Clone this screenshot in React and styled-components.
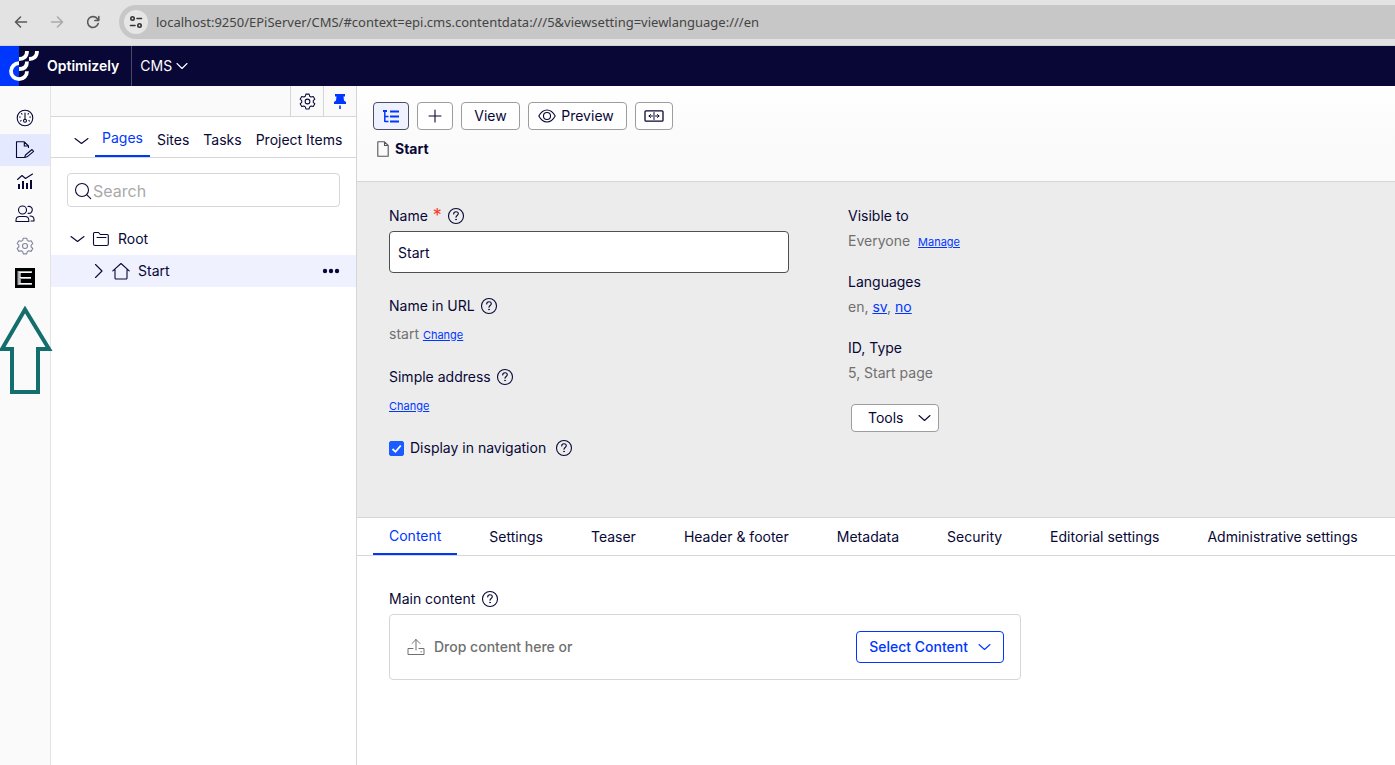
import React from "react";
import styled, { createGlobalStyle, css } from "styled-components";

const color = {
  ink: "#080736",
  blue: "#0037ff",
  muted: "#707070",
  line: "#d6d6d6",
  rail: "#fafafa",
};

const GlobalStyle = createGlobalStyle`
  *, *::before, *::after { box-sizing: border-box; }
  body {
    margin: 0;
    background: #fff;
    color: ${color.ink};
    font: 14px/20px Inter, "Liberation Sans", sans-serif;
  }
  button, input { font: inherit; color: inherit; }
  ul { list-style: none; margin: 0; padding: 0; }
  svg { display: block; flex: none; }
`;

const Page = styled.div`
  min-height: 100vh;
  display: flex;
  flex-direction: column;
`;

const plainButton = css`
  display: flex;
  align-items: center;
  justify-content: center;
  padding: 0;
  border: 0;
  background: none;
  cursor: pointer;
`;

/* Browser bar */
const BrowserBar = styled.div`
  display: flex;
  align-items: center;
  height: 46px;
  padding: 0 0 2px 3px;
  background: #e3e3e3;
  border-bottom: 1px solid #d2d2d2;
`;
const BrowserButton = styled.button`
  ${plainButton}
  width: 36px;
  height: 32px;
  color: ${(p) => (p.$dim ? "#aaa" : "#5a5a5a")};
`;
const AddressBar = styled.div`
  flex: 1;
  display: flex;
  align-items: center;
  gap: 8px;
  height: 34px;
  margin-left: 8px;
  padding-left: 5px;
  border-radius: 17px 0 0 17px;
  background: #c7c7c7;
`;
const SiteInfo = styled.button`
  ${plainButton}
  width: 24px;
  height: 24px;
  border-radius: 50%;
  background: #e6e6e6;
  color: #333;
`;
const Address = styled.input`
  flex: 1;
  min-width: 0;
  padding: 0;
  border: 0;
  outline: 0;
  background: none;
  color: #444;
  font: 13px/20px "Noto Sans", "Open Sans", sans-serif;
`;

/* Product header */
const Header = styled.header`
  display: flex;
  height: 40px;
  background: ${color.ink};
  color: #fff;
`;
const Brand = styled.a`
  display: flex;
  align-items: center;
  gap: 7px;
  padding-right: 12px;
  border-right: 1px solid #4a4a6c;
  color: #fff;
  font-weight: 600;
  text-decoration: none;
`;
const ProductMenu = styled.button`
  ${plainButton}
  gap: 4px;
  padding: 0 8px;
`;

/* Layout */
const Workspace = styled.div`
  flex: 1;
  display: flex;
`;
const Rail = styled.nav`
  position: relative;
  flex: none;
  width: 51px;
  padding-top: 16px;
  border-right: 1px solid #e3e3e3;
  background: ${color.rail};
`;
const RailLink = styled.a`
  display: flex;
  align-items: center;
  justify-content: center;
  height: 32px;
  color: ${(p) => (p.$dim ? "#8483a0" : color.ink)};
  background: ${(p) => (p.$active ? "#e4e9ff" : "none")};
`;
const Pointer = styled.svg`
  position: absolute;
  top: 220px;
  left: -1px;
  z-index: 1;
`;

const Side = styled.aside`
  flex: none;
  width: 306px;
  border-right: 1px solid ${color.line};
  background: #fff;
`;
const SideBar = styled.div`
  display: flex;
  justify-content: flex-end;
  height: 31px;
  border-bottom: 1px solid ${color.line};
  background: ${color.rail};
`;
const SideBarButton = styled.button`
  ${plainButton}
  width: 33px;
  border-left: 1px solid ${color.line};
  color: ${(p) => (p.$blue ? color.blue : color.ink)};
`;
const SideTabs = styled.div`
  display: flex;
  height: 41px;
  padding-left: 16px;
  border-bottom: 1px solid ${color.line};
`;
const Collapse = styled.button`
  ${plainButton}
  width: 28px;
  padding-top: 8px;
`;
const Tab = styled.button`
  ${plainButton}
  padding: ${(p) => (p.$wide ? "1px 16px 0" : "6px 7px 0")};
  white-space: nowrap;
  ${(p) =>
    p.$active &&
    css`
      padding-top: ${p.$wide ? "0" : "4px"};
      border-bottom: 2px solid ${color.blue};
      color: ${color.blue};
    `}
`;
const SearchBox = styled.label`
  display: flex;
  align-items: center;
  gap: 1px;
  height: 34px;
  margin: 15px 16px 16px;
  padding: 2px 0 0 6px;
  border: 1px solid ${color.line};
  border-radius: 4px;
`;
const SearchInput = styled.input`
  flex: 1;
  min-width: 0;
  padding: 0;
  border: 0;
  outline: 0;
  background: none;
  font-size: 16px;
  &::placeholder { color: #a9a9a9; opacity: 1; }
`;
const TreeRow = styled.li`
  display: flex;
  align-items: center;
  height: 32px;
  padding: 0 16px 0 ${(p) => (p.$level ? "40px" : "18px")};
  background: ${(p) => (p.$active ? "#eff1ff" : "none")};
`;
const TreeToggle = styled.button`
  ${plainButton}
  width: ${(p) => (p.$level ? "14px" : "16px")};
`;
const TreeLabel = styled.span`
  flex: 1;
  display: flex;
  align-items: center;
  gap: 8px;
  padding-left: 7px;
`;
const MoreButton = styled.button`
  ${plainButton}
`;

const Main = styled.main`
  flex: 1;
  min-width: 0;
`;
const Top = styled.div`
  height: 96px;
  padding: 16px 16px 0;
  border-bottom: 1px solid ${color.line};
  background: linear-gradient(#fff, #fafafa 60%);
`;
const Toolbar = styled.div`
  display: flex;
  gap: 8px;
`;
const Button = styled.button`
  ${plainButton}
  gap: ${(p) => p.$gap || 4}px;
  height: ${(p) => (p.$primary ? 32 : 28)}px;
  padding: ${(p) => p.$pad || "0 12px"};
  min-width: ${(p) => p.$min || "0"};
  border: 1px solid ${(p) => (p.$primary ? color.blue : "#9d9d9d")};
  border-radius: 4px;
  background: #fff;
  color: ${(p) => (p.$primary ? color.blue : color.ink)};
  ${(p) =>
    p.$pressed &&
    css`
      border-color: #4b4f63;
      background: #eff1ff;
      color: ${color.blue};
    `}
`;
const Title = styled.h1`
  display: flex;
  align-items: center;
  gap: 6px;
  margin: 9px 0 0 4px;
  font-size: 14px;
  line-height: 20px;
  font-weight: 700;
`;
const Properties = styled.section`
  display: flex;
  gap: 59px;
  padding: 24px 32px 59px;
  border-bottom: 1px solid ${color.line};
  background: #ececec;
`;
const Fields = styled.div`
  display: flex;
  flex-direction: column;
  gap: ${(p) => p.$gap}px;
  width: ${(p) => p.$width || "auto"};
`;
const Field = styled.div`
  display: flex;
  flex-direction: column;
  gap: ${(p) => p.$gap || 5}px;
`;
const Line = styled.div`
  display: flex;
  align-items: center;
  gap: ${(p) => p.$gap || 6}px;
  height: 20px;
`;
const CheckLabel = styled.label`
  display: flex;
  align-items: center;
  gap: 6px;
`;
const Required = styled.span`
  color: #f5402c;
  font-size: 18px;
`;
const Value = styled.div`
  height: 20px;
  color: ${color.muted};
`;
const Link = styled.a`
  color: ${color.blue};
  font-size: ${(p) => (p.$small ? 11 : 14)}px;
  margin-left: ${(p) => (p.$spaced ? 4 : 0)}px;
`;
const NameInput = styled.input`
  height: 42px;
  padding: 0 8px;
  border: 1px solid #4f4f4f;
  border-radius: 4px;
  background: #fff;
`;
const Checkbox = styled.input`
  appearance: none;
  width: 15px;
  height: 15px;
  margin: 0;
  border: 1px solid #777;
  border-radius: 2px;
  &:checked {
    border-color: #1a5cff;
    background: #1a5cff url("data:image/svg+xml,%3Csvg xmlns='http://www.w3.org/2000/svg' viewBox='0 0 13 13'%3E%3Cpath d='M2.5 7l3 2.8L10.800 3.500' fill='none' stroke='white' stroke-width='1.800'/%3E%3C/svg%3E");
  }
`;
const ToolsSlot = styled.div`
  display: flex;
  padding-left: 3px;
`;
const MainTabs = styled.div`
  display: flex;
  gap: 16px;
  height: 38px;
  padding: 0 16px;
  border-bottom: 1px solid ${color.line};
`;
const ContentArea = styled.section`
  padding: 33px 32px;
`;
const DropZone = styled.div`
  display: flex;
  align-items: center;
  gap: 8px;
  max-width: 632px;
  margin-top: 5px;
  padding: 16px;
  border: 1px solid ${color.line};
  border-radius: 4px;
  color: ${color.muted};
  font-weight: 500;
`;
const DropText = styled.span`
  flex: 1;
`;

/* Icons */
const Icon = ({ w = 20, h = w, sw = 1.1, children, ...rest }) => (
  <svg width={w} height={h} viewBox={`0 0 ${w} ${h}`} fill="none" stroke="currentColor" strokeWidth={sw} strokeLinejoin="round" strokeLinecap="round" aria-hidden="true" {...rest}>
    {children}
  </svg>
);
const Chevron = ({ w = 14 }) => (
  <Icon w={w} h={8} sw={1.1}><path d={`M1 1.500L${w / 2} 6.500L${w - 1} 1.500`} /></Icon>
);
const Help = () => (
  <Icon w={18} sw={1.1}>
    <circle cx="9" cy="9" r="7.500" />
    <path d="M6.700 7c0-1.500 1-2.200 2.300-2.200s2.300.8 2.300 2c0 1.700-2.300 1.600-2.300 3.400" />
    <circle cx="9" cy="12.500" r=".5" fill="currentColor" strokeWidth=".6" />
  </Icon>
);
const Gear = ({ w = 18 }) => (
  <svg width={w} height={w} viewBox="0 0 18 18" fill="none" stroke="currentColor" strokeWidth="1.100" strokeLinejoin="round" aria-hidden="true">
    <path d="M7.300 1.200h3.400l.6 2.200 1.500.9 2.300-.6 1.700 2.900-1.700 1.600v1.700l1.700 1.600-1.700 2.900-2.300-.6-1.500.9-.6 2.200H7.300l-.6-2.200-1.500-.9-2.300.6-1.700-2.900 1.700-1.600V8.200L1.200 6.600l1.700-2.900 2.300.6 1.500-.9z" />
    <circle cx="9" cy="9" r="2.500" />
  </svg>
);
const Logo = () => (
  <svg width="40" height="40" viewBox="0 0 40 40" fill="none" aria-hidden="true">
    <rect width="19" height="40" fill={color.blue} />
    <g stroke="#fff" strokeWidth="3.800">
      <path d="M27 5C27 10.500 24 13 19 13" />
      <path d="M37 5C37 10.500 34 13 29 13" />
      <path d="M27 15.400C27 20.500 24 23 19 23" />
      <path d="M19 17.200A8 8 0 1 0 27 25.200" />
    </g>
  </svg>
);

const railItems = [
  { name: "Dashboard", icon: (
    <Icon w={18}>
      <circle cx="9" cy="9" r="7.800" />
      <path d="M9 4v6.500M5.500 4.500l.5.600M12.500 4.500l-.5.600M3.500 8h.8M13.700 8h.8M4.500 12l.6-.4M13.500 12l-.6-.4" />
      <circle cx="9" cy="11.800" r="1.500" />
    </Icon>) },
  { name: "Edit", active: true, icon: (
    <Icon w={20}>
      <path d="M13.500 7.500V6L9.300 1.800H1.500v15.700h8M9.300 1.800V6h4.200" />
      <path d="M10.500 15l6.500-5.500 1.600 1.900-6.500 5.400-2.500.7z" />
    </Icon>) },
  { name: "Reports", icon: (
    <Icon w={18}>
      <path d="M1.500 6.500L6 2.500l3.500 3 7-4.500" />
      <path d="M3 16v-5M7 16V8M11 16v-6M15 16V7" strokeWidth="2" strokeLinecap="butt" />
    </Icon>) },
  { name: "Audiences", icon: (
    <Icon w={20}>
      <circle cx="7.500" cy="6" r="4" />
      <path d="M1 17.500v-1.300c0-2.700 2.200-3.700 4-3.700h5c2 0 3.800 1.200 3.800 3.700v1.300zM13 2.500c2.500-.6 4.300 1 4.300 3.300s-1.700 4-4.300 3.500M15 12c2.500 0 4 1.300 4 3.700v1.300h-3" />
    </Icon>) },
  { name: "Settings", dim: true, icon: <Gear /> },
  { name: "Episerver", icon: (
    <svg width="20" height="20" viewBox="0 0 20 20" aria-hidden="true">
      <rect width="20" height="20" fill="#000" />
      <path d="M3.500 3v14M3 4h14M6 10h10M3 16h14" stroke="#a9b1b5" strokeWidth="2" fill="none" />
      <path d="M5 4v12M5 4.500h11.500M5 9.500h11M5 15.500h11.500" stroke="#fff" strokeWidth="1.200" fill="none" />
    </svg>) },
];

const sideTabs = ["Pages", "Sites", "Tasks", "Project Items"];
const mainTabs = ["Content", "Settings", "Teaser", "Header & footer", "Metadata", "Security", "Editorial settings", "Administrative settings"];

export default function App() {
  return (
    <Page>
      <GlobalStyle />
      <BrowserBar>
        <BrowserButton aria-label="Back">
          <Icon w={14} sw={1.6}><path d="M12.500 7H1.500M6.500 2L1.500 7l5 5" /></Icon>
        </BrowserButton>
        <BrowserButton aria-label="Forward" $dim>
          <Icon w={14} sw={1.6}><path d="M1.500 7h11M7.500 2l5 5-5 5" /></Icon>
        </BrowserButton>
        <BrowserButton aria-label="Reload">
          <Icon w={14} sw={1.6}><path d="M12.200 8.500A5.400 5.400 0 1 1 11.500 4L12.800 5.400M12.800 1.500v4H8.800" /></Icon>
        </BrowserButton>
        <AddressBar>
          <SiteInfo aria-label="Site information">
            <Icon w={14} sw={1.6}>
              <circle cx="3.500" cy="3.500" r="1.700" /><path d="M8 3.500h4.500M1.500 10.500h4.500" /><circle cx="10.500" cy="10.500" r="1.700" />
            </Icon>
          </SiteInfo>
          <Address aria-label="Address" defaultValue="localhost:9250/EPiServer/CMS/#context=epi.cms.contentdata:///5&viewsetting=viewlanguage:///en" />
        </AddressBar>
      </BrowserBar>

      <Header>
        <Brand href="#home"><Logo />Optimizely</Brand>
        <ProductMenu>CMS<Chevron w={12} /></ProductMenu>
      </Header>

      <Workspace>
        <Rail aria-label="Main">
          {railItems.map((item) => (
            <RailLink key={item.name} href="#nav" aria-label={item.name} $active={item.active} $dim={item.dim}>{item.icon}</RailLink>
          ))}
          <Pointer width="54" height="89" viewBox="0 0 54 89" fill="none" stroke="#146e6e" strokeWidth="4" aria-hidden="true">
            <path d="M26 3.500L3 43H13v43h26V43h11z" />
          </Pointer>
        </Rail>

        <Side>
          <SideBar>
            <SideBarButton aria-label="Panel settings"><Gear w={17} /></SideBarButton>
            <SideBarButton aria-label="Pin" $blue>
              <Icon w={14} h={16} stroke="none" fill="currentColor">
                <path d="M2 1h10v2.500h-1.500l.5 4 2 1.500v2H1V9l2-1.500.5-4H2zM6.200 12.500h1.600V16H6.200z" />
              </Icon>
            </SideBarButton>
          </SideBar>
          <SideTabs>
            <Collapse aria-label="Collapse"><Chevron w={15} /></Collapse>
            {sideTabs.map((t, i) => <Tab key={t} $active={i === 0}>{t}</Tab>)}
          </SideTabs>
          <SearchBox>
            <Icon w={18}><circle cx="8" cy="8" r="6.500" /><path d="M12.700 12.700l4 4" /></Icon>
            <SearchInput placeholder="Search" aria-label="Search" />
          </SearchBox>
          <ul>
            <TreeRow>
              <TreeToggle aria-label="Collapse Root"><Chevron w={15} /></TreeToggle>
              <TreeLabel>
                <Icon w={18} h={16}><path d="M1.500 13V2.500q0-1 1-1h4l1.800 2h7q1 0 1 1V13q0 1.500-1.500 1.500H3q-1.500 0-1.500-1.500zM5 6.500h9" /></Icon>
                Root
              </TreeLabel>
            </TreeRow>
            <TreeRow $level $active>
              <TreeToggle $level aria-label="Expand Start"><Icon w={9} h={16}><path d="M1.500 1.500L8 8l-6.500 6.500" /></Icon></TreeToggle>
              <TreeLabel>
                <Icon w={18}><path d="M.8 8.800L9 1.500l8.200 7.300M3 7.500v8.500q0 1 1 1h10q1 0 1-1V7.500" /></Icon>
                Start
              </TreeLabel>
              <MoreButton aria-label="More options">
                <Icon w={18} h={6} stroke="none" fill="currentColor"><circle cx="3" cy="3" r="2.200" /><circle cx="9" cy="3" r="2.200" /><circle cx="15" cy="3" r="2.200" /></Icon>
              </MoreButton>
            </TreeRow>
          </ul>
        </Side>

        <Main>
          <Top>
            <Toolbar>
              <Button aria-label="Toggle tree" $pad="0 9px" $pressed>
                <Icon w={16} sw={2} strokeLinecap="butt" strokeLinejoin="miter"><path d="M0 3h4" /><path d="M1.800 2v12M1.800 8.500H5.500M1.800 13.500H5.500" strokeWidth="1.500" /><path d="M7 3.500h9M7 8.500h9M7 13.500h9" /></Icon>
              </Button>
              <Button aria-label="Add" $pad="0 10px"><Icon w={14}><path d="M7 1v12M1 7h12" /></Icon></Button>
              <Button $min="59px">View</Button>
              <Button $pad="0 12px 0 9px" $gap={5} $min="99px">
                <Icon w={18} h={16}><path d="M.8 8C3 4 6 2 9 2s6 2 8.200 6C15 12 12 14 9 14S3 12 .8 8z" /><circle cx="9" cy="8" r="3.500" /></Icon>
                Preview
              </Button>
              <Button aria-label="Compare" $pad="0 8px">
                <Icon w={20} h={12}><rect x="1" y=".8" width="18" height="10.400" rx="1" strokeWidth="1.300" /><path d="M10 2.500v7M5 6h3.500M6.500 4.500L5 6l1.500 1.500M11.500 6H15M13.500 4.500L15 6l-1.500 1.500" strokeWidth="1" /></Icon>
              </Button>
            </Toolbar>
            <Title>
              <Icon w={12} h={16} stroke="#555"><path d="M.8.8h6.700l3.700 3.700v10.700H.8zM7.500.8v3.700h3.700" /></Icon>
              Start
            </Title>
          </Top>

          <Properties>
            <Fields $gap={23} $width="400px">
              <Field>
                <Line $gap={5}><label htmlFor="name">Name</label><Required>*</Required><Help /></Line>
                <NameInput id="name" defaultValue="Start" />
              </Field>
              <Field $gap={8}>
                <Line $gap={5}>Name in URL<Help /></Line>
                <Value>start <Link href="#change" $small>Change</Link></Value>
              </Field>
              <Field $gap={8}>
                <Line $gap={5}>Simple address<Help /></Line>
                <Value><Link href="#change" $small>Change</Link></Value>
              </Field>
              <Line $gap={9}>
                <CheckLabel><Checkbox type="checkbox" defaultChecked />Display in navigation</CheckLabel>
                <Help />
              </Line>
            </Fields>
            <Fields $gap={21}>
              <Field>
                <Line>Visible to</Line>
                <Value>Everyone <Link href="#manage" $small $spaced>Manage</Link></Value>
              </Field>
              <Field>
                <Line>Languages</Line>
                <Value>en, <Link href="#sv">sv</Link>, <Link href="#no">no</Link></Value>
              </Field>
              <Field>
                <Line>ID, Type</Line>
                <Value>5, Start page</Value>
              </Field>
              <ToolsSlot><Button $pad="0 7px 0 16px" $gap={14}>Tools<Chevron w={13} /></Button></ToolsSlot>
            </Fields>
          </Properties>

          <MainTabs>
            {mainTabs.map((t, i) => <Tab key={t} $wide $active={i === 0}>{t}</Tab>)}
          </MainTabs>
          <ContentArea>
            <Line>Main content<Help /></Line>
            <DropZone>
              <Icon w={20} sw={1}><path d="M10 13V2.500M6 6.500l4-4 4 4M7 11.500H2v6h16v-6h-5M15 14.800h.5" /></Icon>
              <DropText>Drop content here or</DropText>
              <Button $primary $gap={10}>Select Content<Chevron w={13} /></Button>
            </DropZone>
          </ContentArea>
        </Main>
      </Workspace>
    </Page>
  );
}
